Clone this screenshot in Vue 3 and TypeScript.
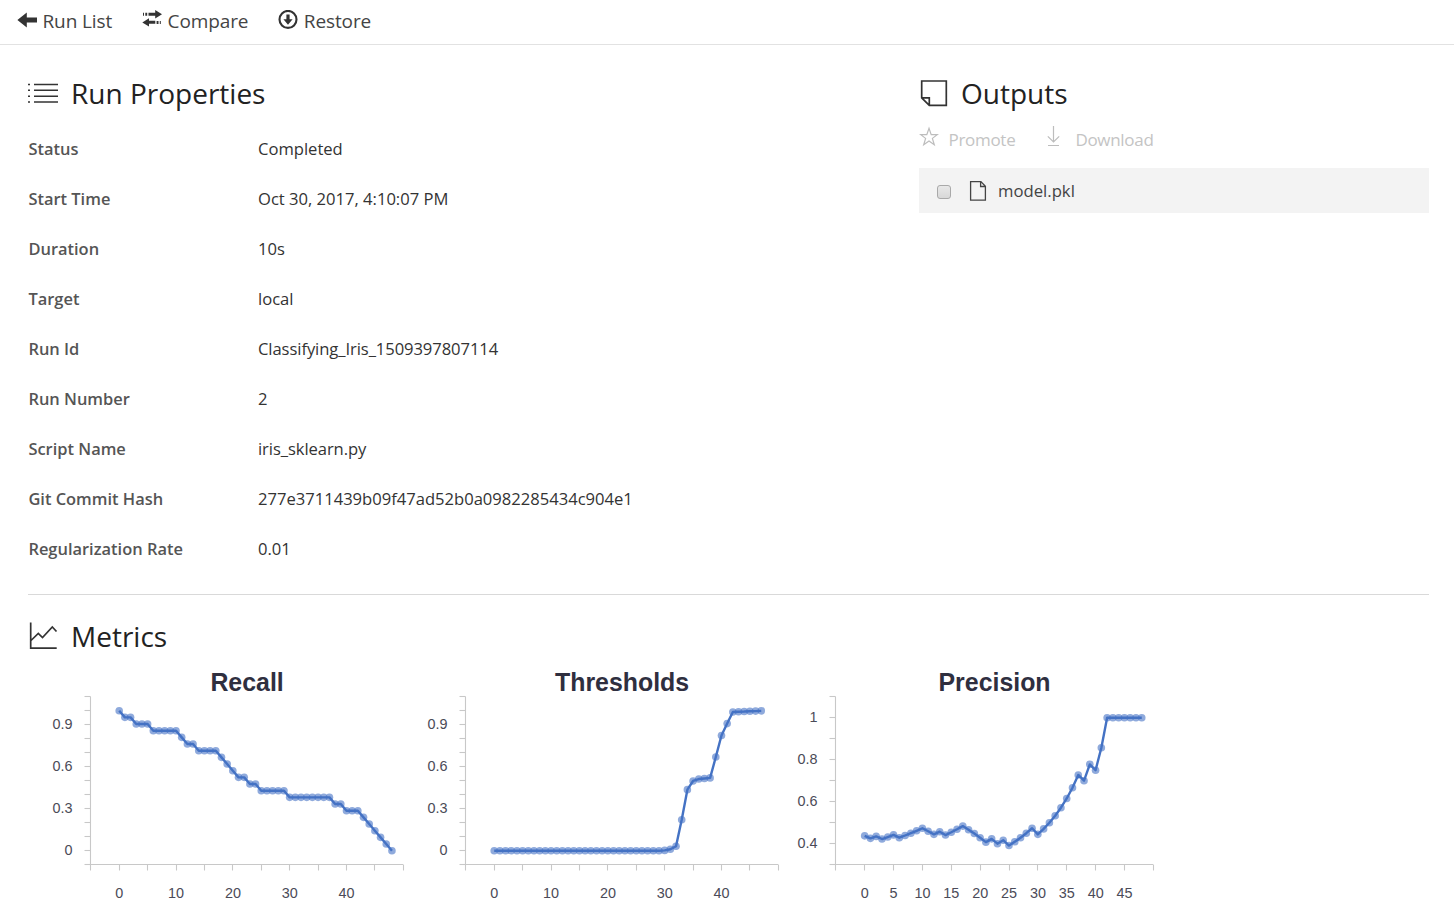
<script setup lang="ts">
interface Property {
  label: string
  value: string
}

interface ChartSpec {
  title: string
  values: number[]
  width: number
  plotWidth: number
  yMin: number
  yMax: number
  yLabels: number[]
  xLabelStep: number
}

const properties: Property[] = [
  { label: 'Status', value: 'Completed' },
  { label: 'Start Time', value: 'Oct 30, 2017, 4:10:07 PM' },
  { label: 'Duration', value: '10s' },
  { label: 'Target', value: 'local' },
  { label: 'Run Id', value: 'Classifying_Iris_1509397807114' },
  { label: 'Run Number', value: '2' },
  { label: 'Script Name', value: 'iris_sklearn.py' },
  { label: 'Git Commit Hash', value: '277e3711439b09f47ad52b0a0982285434c904e1' },
  { label: 'Regularization Rate', value: '0.01' },
]

// True positives remaining at each threshold step.
const hits = [
  21, 20, 20, 19, 19, 19, 18, 18, 18, 18, 18, 17, 16, 16, 15, 15, 15, 15, 14, 13, 12, 11, 11, 10, 10,
  9, 9, 9, 9, 9, 8, 8, 8, 8, 8, 8, 8, 8, 7, 7, 6, 6, 6, 5, 4, 3, 2, 1, 0,
]
const recall = hits.map((h) => h / 21)
const precision = hits.map((h, i) => (i < 48 ? h / (48 - i) : 1))
const thresholds = [
  ...Array<number>(30).fill(0),
  0.002, 0.01, 0.032, 0.221, 0.436, 0.498, 0.512, 0.516, 0.52, 0.669, 0.823, 0.908, 0.991, 0.993,
  0.994, 0.996, 0.997, 0.999,
]

const specs: ChartSpec[] = [
  { title: 'Recall', values: recall, width: 375, plotWidth: 312.5, yMin: -0.1, yMax: 1.1, yLabels: [0, 0.3, 0.6, 0.9], xLabelStep: 10 },
  { title: 'Thresholds', values: thresholds, width: 370, plotWidth: 312.5, yMin: -0.1, yMax: 1.1, yLabels: [0, 0.3, 0.6, 0.9], xLabelStep: 10 },
  { title: 'Precision', values: precision, width: 400, plotWidth: 317.5, yMin: 0.3, yMax: 1.1, yLabels: [0.4, 0.6, 0.8, 1], xLabelStep: 5 },
]

const LEFT = 62.5
const TOP = 31.5
const BOTTOM = 199.5

const charts = specs.map((s) => {
  const px = (v: number) => LEFT + ((v + 5) / 55) * s.plotWidth
  const py = (v: number) => BOTTOM - ((v - s.yMin) / (s.yMax - s.yMin)) * (BOTTOM - TOP)
  const steps = Math.round((s.yMax - s.yMin) * 10)
  const points = s.values.map((v, i) => ({ x: px(i) + 0.3, y: py(v) + 0.2 }))
  const xLabels: { x: number; text: number }[] = []
  for (let v = 0; v < 50; v += s.xLabelStep) xLabels.push({ x: px(v) + 0.4, text: v })
  return {
    title: s.title,
    width: s.width,
    right: LEFT + s.plotWidth,
    titleX: LEFT + s.plotWidth / 2 + 0.3,
    points,
    line: points.map((p) => `${p.x.toFixed(2)},${p.y.toFixed(2)}`).join(' '),
    xTicks: Array.from({ length: 12 }, (_, i) => Math.round(px(i * 5 - 5) - 0.1) + 0.5),
    yTicks: Array.from({ length: steps + 1 }, (_, i) => Math.floor(py(s.yMin + i / 10) + 0.01) + 0.5),
    xLabels,
    yLabels: s.yLabels.map((v) => ({ y: py(v), text: v })),
  }
})
</script>

<template>
  <div class="page">
    <nav class="toolbar">
      <a class="tool">
        <svg class="tool-icon" width="20" height="20" viewBox="0 0 20 20">
          <path d="M.4 10 9.8 2.6V7.6H20v4.8H9.8v5z" fill="#333" />
        </svg>
        <span>Run List</span>
      </a>
      <a class="tool compare">
        <svg class="tool-icon" width="20" height="20" viewBox="0 0 20 20">
          <path d="M1 2.700h1v3H1zM3.300 2.700h1.900v3H3.300zM6.500 2.700h6.700V0L20 4.200l-6.800 4.300V5.700H6.500zM.3 12.400 7 8.200v2.600h6.300v3H7v2.800zM14.600 10.900h1.900v3h-1.900zM17.800 10.900h1v3h-1z" fill="#333" />
        </svg>
        <span>Compare</span>
      </a>
      <a class="tool restore">
        <svg class="tool-icon" width="20" height="20" viewBox="0 0 20 20">
          <circle cx="10" cy="9.400" r="8.500" fill="none" stroke="#333" stroke-width="2.100" />
          <path d="M8.400 4.500h3.200v4.700h3L10 14.700 5.400 9.200h3z" fill="#333" />
        </svg>
        <span>Restore</span>
      </a>
    </nav>

    <main class="content">
      <div class="top">
        <section class="run-properties">
          <h2 class="heading">
            <svg class="heading-icon wide" width="32" height="32" viewBox="0 0 32 32">
              <path d="M6 7.500h24M6 13.300h24M6 19.200h24M6 25h24" stroke="#333" stroke-width="1.600" />
              <path d="M0 7.500h2M0 13.300h2M0 19.200h2M0 25h2" stroke="#333" stroke-width="1.600" />
            </svg>
            <span>Run Properties</span>
          </h2>
          <dl class="properties">
            <div v-for="p in properties" :key="p.label" class="property">
              <dt>{{ p.label }}</dt>
              <dd :class="{ tight: p.value.includes('_') }">{{ p.value }}</dd>
            </div>
          </dl>
        </section>

        <section class="outputs">
          <h2 class="heading">
            <svg class="heading-icon" width="32" height="32" viewBox="0 0 32 32">
              <path d="M2.700 4h24.600v24.300H10.300L2.700 20.800zM2.700 20.800h7.600v7.500" fill="none" stroke="#333" stroke-width="1.700" />
            </svg>
            <span>Outputs</span>
          </h2>
          <div class="actions">
            <span class="action">
              <svg width="20" height="24" viewBox="0 0 20 24">
                <path d="M10 4.300 12.200 10.600H18.300L13.400 14.400 15.300 20.800 10 17 4.700 20.800 6.600 14.400 1.700 10.600H7.800z" fill="none" stroke="#bdbdbd" stroke-width="1.200" />
              </svg>
              <span class="promote">Promote</span>
            </span>
            <span class="action download">
              <svg width="20" height="24" viewBox="0 0 20 24">
                <path d="M9.500 2v15.800M3.800 12.300l5.700 5.700 5.700-5.700M4 21.500h11" fill="none" stroke="#bdbdbd" stroke-width="1.200" />
              </svg>
              <span class="promote">Download</span>
            </span>
          </div>
          <div class="file">
            <span class="checkbox"></span>
            <svg class="file-icon" width="18" height="22" viewBox="0 0 18 22">
              <path d="M1.600 1.600h10.300l4.500 4.600v13.900H1.600zM11.600 1.600v4.900h4.800" fill="none" stroke="#444" stroke-width="1.300" />
            </svg>
            <span>model.pkl</span>
          </div>
        </section>
      </div>

      <section class="metrics">
        <h2 class="heading">
          <svg class="heading-icon wide" width="32" height="32" viewBox="0 0 32 32">
            <path d="M2.700 2.500v25.600h26M3 20.500l7.300-7 4.200 4L24.300 7l4.200 4.500" fill="none" stroke="#333" stroke-width="1.700" />
          </svg>
          <span>Metrics</span>
        </h2>
        <div class="charts">
          <svg v-for="c in charts" :key="c.title" class="chart" :width="c.width" height="240">
            <text class="title" :x="c.titleX" y="26">{{ c.title }}</text>
            <g class="axis">
              <path :d="`M${LEFT} ${TOP}V${BOTTOM}H${c.right}`" />
              <path v-for="(x, i) in c.xTicks" :key="'x' + i" :d="`M${x} ${BOTTOM}v6`" />
              <path v-for="(y, i) in c.yTicks" :key="'y' + i" :d="`M${LEFT} ${y}h-6`" />
            </g>
            <text v-for="l in c.xLabels" :key="'lx' + l.text" class="x-label" :x="l.x" y="233">{{ l.text }}</text>
            <text v-for="l in c.yLabels" :key="'ly' + l.text" class="y-label" x="44.500" :y="l.y + 4">{{ l.text }}</text>
            <circle v-for="(p, i) in c.points" :key="'p' + i" class="dot" :cx="p.x" :cy="p.y" r="3.800" />
            <polyline class="series" :points="c.line" />
          </svg>
        </div>
      </section>
    </main>
  </div>
</template>

<style>
body {
  margin: 0;
  background: #fff;
}
</style>

<style scoped>
.page {
  height: 921px;
  overflow: hidden;
  font-family: 'Open Sans', 'Noto Sans', sans-serif;
  color: #333;
}
.toolbar {
  box-sizing: border-box;
  height: 45px;
  border-bottom: 1px solid #e2e2e2;
  display: flex;
  padding-left: 17px;
}
.tool {
  display: flex;
  height: 42px;
  align-items: center;
  gap: 5.5px;
  font-size: 19px;
  font-weight: 380;
  letter-spacing: -0.12px;
  color: #444;
}
.compare {
  margin-left: 30px;
}
.restore {
  margin-left: 30px;
}
.tool-icon {
  margin-top: -3px;
}
.content {
  padding: 0 25px 0 28px;
}
.top {
  box-sizing: border-box;
  height: 550px;
  padding-top: 27px;
  border-bottom: 1px solid #d9d9d9;
  display: flex;
}
.run-properties {
  width: 891px;
}
.outputs {
  flex: 1;
}
.heading {
  margin: 0;
  height: 42px;
  display: flex;
  align-items: center;
  font-size: 28px;
  font-weight: 370;
  color: #222;
}
.heading-icon {
  flex: none;
  margin-right: 10px;
}
.heading-icon.wide {
  margin-right: 11px;
}
.properties {
  margin: 9px 0 0;
}
.property {
  height: 50px;
  display: flex;
  align-items: center;
}
dt {
  width: 230px;
  font-size: 16.45px;
  font-weight: 590;
  color: #555;
  text-indent: 0.4px;
}
dd {
  margin: 0;
  font-size: 16.6px;
  font-weight: 380;
  letter-spacing: -0.01px;
}
dd.tight {
  letter-spacing: -0.08px;
}
.actions {
  height: 30px;
  margin: 10px 0 14px;
  display: flex;
  font-size: 17px;
  color: #c4c4c4;
}
.action {
  display: flex;
  align-items: center;
  gap: 9.5px;
}
.promote {
  letter-spacing: -0.3px;
}
.download {
  margin-left: 29px;
  gap: 11px;
}
.action svg {
  margin-top: -6px;
}
.file {
  height: 45px;
  background: #f3f3f3;
  display: flex;
  align-items: center;
  font-size: 16.7px;
  color: #444;
}
.checkbox {
  box-sizing: border-box;
  width: 14px;
  height: 14px;
  margin: 3px 18px 0 18px;
  border: 1px solid #a9a9a9;
  border-radius: 3px;
  background: linear-gradient(#e8e8e8, #d8d8d8);
}
.file-icon {
  margin-right: 11px;
}
.metrics {
  padding-top: 20px;
}
.charts {
  display: flex;
  margin-top: 8px;
}
.chart {
  display: block;
  flex: none;
  overflow: visible;
  font-family: 'Liberation Sans', Arial, sans-serif;
}
.title {
  font-size: 24.9px;
  font-weight: 700;
  fill: #2f2f3f;
  text-anchor: middle;
}
.axis path {
  fill: none;
  stroke: #c8c8c8;
  stroke-width: 1.1;
}
.x-label,
.y-label {
  font-size: 14.4px;
  fill: #4b4b58;
}
.x-label {
  text-anchor: middle;
}
.y-label {
  text-anchor: end;
}
.dot {
  fill: #4472c4;
  fill-opacity: 0.6;
}
.series {
  fill: none;
  stroke: #4472c4;
  stroke-width: 2.4;
  stroke-linejoin: round;
}
</style>
